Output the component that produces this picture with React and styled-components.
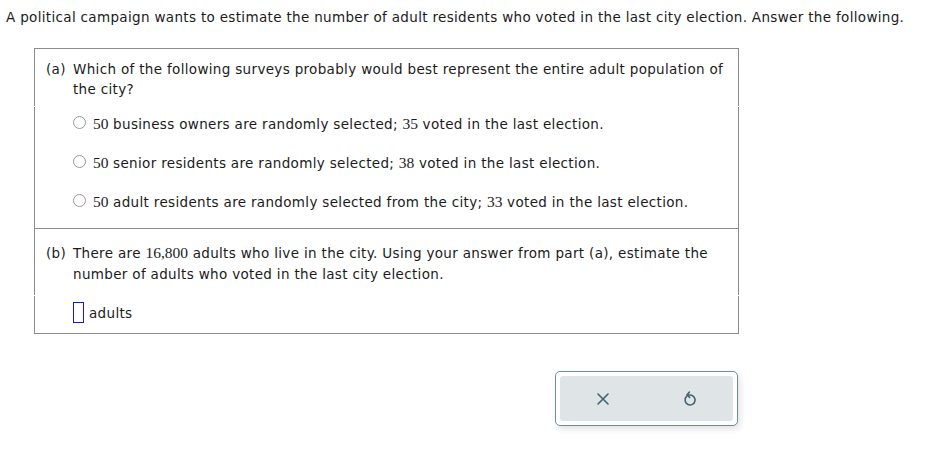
import React from "react";
import styled, { createGlobalStyle } from "styled-components";

const GlobalStyle = createGlobalStyle`
  html, body {
    margin: 0;
    padding: 0;
    background: #fff;
  }
  body {
    font-family: "DejaVu Sans", Verdana, sans-serif;
    font-size: 13.5px;
    letter-spacing: 0.33px;
    color: #1b1b1b;
  }
  * { box-sizing: border-box; }
`;

const Page = styled.div`
  width: 934px;
  height: 474px;
  padding: 7px 0 0 6px;
`;

const Prompt = styled.p`
  margin: 0;
  line-height: 20px;
`;

const QuestionBox = styled.div`
  margin: 21px 0 0 28px;
  width: 705px;
  border-top: 1px solid #8c8c8c;
  border-bottom: 1px solid #8c8c8c;
`;

const Part = styled.section`
  & + & {
    border-top: 1px solid #8c8c8c;
  }
`;

const Segment = styled.div`
  border-left: 1px solid #8c8c8c;
  border-right: 1px solid #8c8c8c;
  padding: ${(p) => p.$pad};
  & + & {
    margin-top: 1px;
  }
`;

const Stem = styled.div`
  display: flex;
  line-height: ${(p) => p.$lh || "20px"};
`;

const Label = styled.span`
  flex: 0 0 27px;
`;

const Num = styled.span`
  font-family: "Liberation Serif", "Times New Roman", serif;
  font-size: 15.5px;
  letter-spacing: 0;
  line-height: 1;
`;

const Options = styled.div`
  display: flex;
  flex-direction: column;
  gap: 18px;
`;

const Option = styled.label`
  display: flex;
  align-items: center;
  gap: 7px;
  line-height: 20px;
  &:nth-child(n + 2) {
    margin-top: 1px;
  }
`;

const Radio = styled.span`
  width: 13px;
  height: 13px;
  border-radius: 50%;
  border: 1px solid #999;
  background: #fff;
  margin-top: -3px;
`;

const AnswerRow = styled.div`
  display: flex;
  align-items: center;
  gap: 5px;
  line-height: 20px;
`;

const AnswerInput = styled.span`
  display: inline-block;
  width: 11px;
  height: 21px;
  border: 1px solid #1515e6;
`;

const Footer = styled.div`
  display: flex;
  justify-content: flex-end;
  margin: 37px 0 0 0;
  width: 732px;
`;

const ToolFrame = styled.div`
  width: 183px;
  height: 55px;
  padding: 4px;
  border: 1px solid #6f8e99;
  border-radius: 5px;
  background: #fff;
  box-shadow: 2px 3px 6px rgba(0, 0, 0, 0.12);
`;

const ToolBar = styled.div`
  display: flex;
  height: 100%;
  background: #dfe5e7;
  border-radius: 3px;
`;

const ToolButton = styled.button`
  flex: 1;
  display: flex;
  align-items: center;
  justify-content: center;
  border: 0;
  background: transparent;
  color: #3f6470;
  padding: 0;
  cursor: pointer;
`;

const CloseIcon = () => (
  <svg width="14" height="14" viewBox="0 0 14 14" fill="none">
    <path d="M2 2 L12 12 M12 2 L2 12" stroke="currentColor" strokeWidth="1.6" strokeLinecap="round" />
  </svg>
);

const ResetIcon = () => (
  <svg width="16" height="18" viewBox="0 0 16 18" fill="none">
    <path
      d="M4.6 6.4 A5 5 0 1 0 8 5 L5.2 5"
      stroke="currentColor"
      strokeWidth="1.6"
      strokeLinecap="round"
      strokeLinejoin="round"
    />
    <path d="M7.4 2 L5 5 L7.6 7.4" stroke="currentColor" strokeWidth="1.6" strokeLinecap="round" strokeLinejoin="round" />
  </svg>
);

const options = [
  ["50", " business owners are randomly selected; ", "35", " voted in the last election."],
  ["50", " senior residents are randomly selected; ", "38", " voted in the last election."],
  ["50", " adult residents are randomly selected from the city; ", "33", " voted in the last election."],
];

export default function App() {
  return (
    <Page>
      <GlobalStyle />
      <Prompt>
        A political campaign wants to estimate the number of adult residents who voted in the last city election.
        Answer the following.
      </Prompt>
      <QuestionBox>
        <Part>
          <Segment $pad="10px 10px 7px 11px">
            <Stem>
              <Label>(a)</Label>
              <span>Which of the following surveys probably would best represent the entire adult population of the city?</span>
            </Stem>
          </Segment>
          <Segment $pad="7px 10px 16px 38px">
            <Options>
              {options.map((o, i) => (
                <Option key={i}>
                  <Radio />
                  <span>
                    <Num>{o[0]}</Num>
                    {o[1]}
                    <Num>{o[2]}</Num>
                    {o[3]}
                  </span>
                </Option>
              ))}
            </Options>
          </Segment>
        </Part>
        <Part>
          <Segment $pad="14px 10px 10px 11px">
            <Stem $lh="21px">
              <Label>(b)</Label>
              <span>
                There are <Num>16,800</Num> adults who live in the city. Using your answer from part (a), estimate the
                number of adults who voted in the last city election.
              </span>
            </Stem>
          </Segment>
          <Segment $pad="6px 10px 10px 38px">
            <AnswerRow>
              <AnswerInput />
              <span>adults</span>
            </AnswerRow>
          </Segment>
        </Part>
      </QuestionBox>
      <Footer>
        <ToolFrame>
          <ToolBar>
            <ToolButton aria-label="Clear">
              <CloseIcon />
            </ToolButton>
            <ToolButton aria-label="Reset">
              <ResetIcon />
            </ToolButton>
          </ToolBar>
        </ToolFrame>
      </Footer>
    </Page>
  );
}
